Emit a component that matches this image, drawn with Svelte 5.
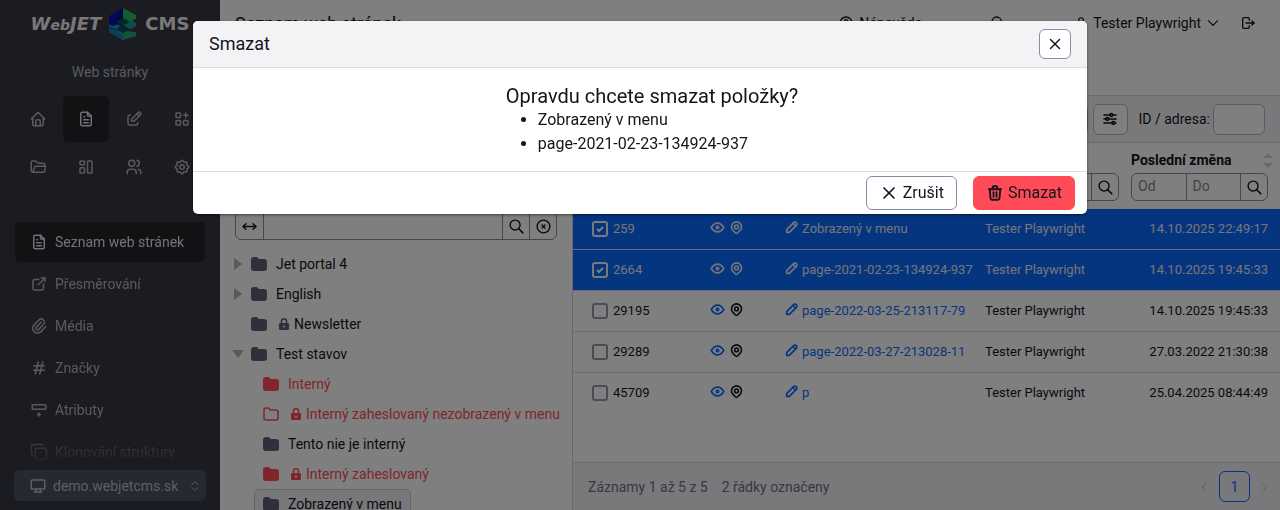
<script>
  const paths = {
    home: ['M5 12H3l9-9 9 9h-2', 'M5 12v7a2 2 0 0 0 2 2h10a2 2 0 0 0 2-2v-7', 'M9 21v-6a2 2 0 0 1 2-2h2a2 2 0 0 1 2 2v6'],
    file: ['M14 3v4a1 1 0 0 0 1 1h4', 'M17 21H7a2 2 0 0 1-2-2V5a2 2 0 0 1 2-2h7l5 5v11a2 2 0 0 1-2 2z', 'M9 9h1', 'M9 13h6', 'M9 17h6'],
    edit: ['M7 7H6a2 2 0 0 0-2 2v9a2 2 0 0 0 2 2h9a2 2 0 0 0 2-2v-1', 'M20.4 6.6a2.1 2.1 0 0 0-3-3L9 12v3h3l8.400-8.400z', 'M16 5l3 3'],
    apps: ['M4 5a1 1 0 0 1 1-1h4a1 1 0 0 1 1 1v4a1 1 0 0 1-1 1H5a1 1 0 0 1-1-1z', 'M4 15a1 1 0 0 1 1-1h4a1 1 0 0 1 1 1v4a1 1 0 0 1-1 1H5a1 1 0 0 1-1-1z', 'M14 15a1 1 0 0 1 1-1h4a1 1 0 0 1 1 1v4a1 1 0 0 1-1 1h-4a1 1 0 0 1-1-1z', 'M14 7h6', 'M17 4v6'],
    folderOpen: ['M5 19l2.757-7.351A1 1 0 0 1 8.693 11H21a1 1 0 0 1 .986 1.164l-.996 5.211A2 2 0 0 1 19.026 19H5a2 2 0 0 1-2-2V6a2 2 0 0 1 2-2h4l3 3h7a2 2 0 0 1 2 2v2'],
    layout: ['M4 5a1 1 0 0 1 1-1h4a1 1 0 0 1 1 1v3a1 1 0 0 1-1 1H5a1 1 0 0 1-1-1z', 'M4 14a1 1 0 0 1 1-1h4a1 1 0 0 1 1 1v5a1 1 0 0 1-1 1H5a1 1 0 0 1-1-1z', 'M14 5a1 1 0 0 1 1-1h4a1 1 0 0 1 1 1v14a1 1 0 0 1-1 1h-4a1 1 0 0 1-1-1z'],
    users: ['M5 7a4 4 0 1 0 8 0 4 4 0 1 0-8 0', 'M3 21v-2a4 4 0 0 1 4-4h4a4 4 0 0 1 4 4v2', 'M16 3.130a4 4 0 0 1 0 7.750', 'M21 21v-2a4 4 0 0 0-3-3.850'],
    settings: ['M10.325 4.317c.426-1.756 2.924-1.756 3.350 0a1.724 1.724 0 0 0 2.573 1.066c1.543-.94 3.310.826 2.370 2.370a1.724 1.724 0 0 0 1.065 2.572c1.756.426 1.756 2.924 0 3.350a1.724 1.724 0 0 0-1.066 2.573c.94 1.543-.826 3.310-2.370 2.370a1.724 1.724 0 0 0-2.572 1.065c-.426 1.756-2.924 1.756-3.350 0a1.724 1.724 0 0 0-2.573-1.066c-1.543.94-3.310-.826-2.370-2.370a1.724 1.724 0 0 0-1.065-2.572c-1.756-.426-1.756-2.924 0-3.350a1.724 1.724 0 0 0 1.066-2.573c-.94-1.543.826-3.310 2.370-2.370 1 .608 2.296.07 2.572-1.065z', 'M9 12a3 3 0 1 0 6 0 3 3 0 0 0-6 0'],
    external: ['M12 6H6a2 2 0 0 0-2 2v10a2 2 0 0 0 2 2h10a2 2 0 0 0 2-2v-6', 'M11 13l9-9', 'M15 4h5v5'],
    clip: ['M15 7l-6.500 6.500a1.500 1.500 0 0 0 3 3L18 10a3 3 0 0 0-6-6l-6.500 6.500a4.500 4.500 0 0 0 9 9L21 13'],
    hash: ['M5 9h14', 'M5 15h14', 'M11 4L7 20', 'M17 4l-4 16'],
    attributes: ['M4 5h16a1 1 0 0 1 1 1v4a1 1 0 0 1-1 1H4a1 1 0 0 1-1-1V6a1 1 0 0 1 1-1z', 'M10 18h4', 'M12 16v4'],
    copy: ['M7 10a3 3 0 0 1 3-3h9a3 3 0 0 1 3 3v9a3 3 0 0 1-3 3h-9a3 3 0 0 1-3-3z', 'M4 17a2 2 0 0 1-2-2V5a3 3 0 0 1 3-3h10a2 2 0 0 1 2 1'],
    desktop: ['M3 5a1 1 0 0 1 1-1h16a1 1 0 0 1 1 1v10a1 1 0 0 1-1 1H4a1 1 0 0 1-1-1z', 'M7 20h10', 'M9 16v4', 'M15 16v4'],
    selector: ['M6 9l6-6 6 6', 'M6 15l6 6 6-6'],
    x: ['M18 6L6 18', 'M6 6l12 12'],
    trash: ['M4 7h16', 'M10 11v6', 'M14 11v6', 'M5 7l1 12a2 2 0 0 0 2 2h8a2 2 0 0 0 2-2l1-12', 'M9 7V4a1 1 0 0 1 1-1h4a1 1 0 0 1 1 1v3'],
    search: ['M3 10a7 7 0 1 0 14 0 7 7 0 1 0-14 0', 'M21 21l-6-6'],
    arrows: ['M7 8l-4 4 4 4', 'M17 8l4 4-4 4', 'M3 12h18'],
    clear: ['M3 12a9 9 0 1 0 18 0 9 9 0 1 0-18 0', 'M10 10l4 4', 'M14 10l-4 4'],
    help: ['M3 12a9 9 0 1 0 18 0 9 9 0 1 0-18 0', 'M12 17v.010', 'M12 13.500a1.500 1.500 0 0 1 1-1.500 2.600 2.600 0 1 0-3-4'],
    user: ['M8 7a4 4 0 1 0 8 0 4 4 0 0 0-8 0', 'M6 21v-2a4 4 0 0 1 4-4h4a4 4 0 0 1 4 4v2'],
    down: ['M4 8l8 8 8-8'],
    logout: ['M14 8V6a2 2 0 0 0-2-2H6a2 2 0 0 0-2 2v12a2 2 0 0 0 2 2h6a2 2 0 0 0 2-2v-2', 'M9 12h12l-3-3', 'M18 15l3-3'],
    sliders: ['M12 6a2 2 0 1 0 4 0 2 2 0 1 0-4 0', 'M3 6h9', 'M16 6h5', 'M6 12a2 2 0 1 0 4 0 2 2 0 1 0-4 0', 'M3 12h3', 'M10 12h11', 'M15 18a2 2 0 1 0 4 0 2 2 0 1 0-4 0', 'M3 18h12', 'M19 18h2'],
    eye: ['M10 12a2 2 0 1 0 4 0 2 2 0 0 0-4 0', 'M22 12c-2.700 4.700-6 7-10 7s-7.300-2.300-10-7c2.700-4.700 6-7 10-7s7.300 2.300 10 7'],
    pin: ['M9 11a3 3 0 1 0 6 0 3 3 0 0 0-6 0', 'M17.657 16.657L13.414 20.900a2 2 0 0 1-2.827 0l-4.244-4.243a8 8 0 1 1 11.314 0z'],
    pencil: ['M4 20h4L18.500 9.500a2.828 2.828 0 1 0-4-4L4 16v4', 'M13.500 6.500l4 4'],
    left: ['M15 6l-6 6 6 6'],
    right: ['M9 6l6 6-6 6']
  };

  const modules = [
    ['home', 'Úvod'], ['file', 'Web stránky'], ['edit', 'Příspěvky'], ['apps', 'Aplikace'],
    ['folderOpen', 'Soubory'], ['layout', 'Šablony'], ['users', 'Uživatelé'], ['settings', 'Nastavení']
  ];
  const menu = [
    ['file', 'Seznam web stránek'], ['external', 'Přesměrování'], ['clip', 'Média'],
    ['hash', 'Značky'], ['attributes', 'Atributy'], ['copy', 'Klonování struktury']
  ];
  const tree = [
    { name: 'Jet portal 4', arrow: 'closed' },
    { name: 'English', arrow: 'closed' },
    { name: 'Newsletter', locked: true },
    { name: 'Test stavov', arrow: 'open' },
    { name: 'Interný', child: true, internal: true },
    { name: 'Interný zaheslovaný nezobrazený v menu', child: true, internal: true, locked: true, outline: true },
    { name: 'Tento nie je interný', child: true },
    { name: 'Interný zaheslovaný', child: true, internal: true, locked: true },
    { name: 'Zobrazený v menu', child: true, selected: true }
  ];
  let rows = $state([
    { id: 259, name: 'Zobrazený v menu', date: '14.10.2025 22:49:17', selected: true },
    { id: 2664, name: 'page-2021-02-23-134924-937', date: '14.10.2025 19:45:33', selected: true },
    { id: 29195, name: 'page-2022-03-25-213117-79', date: '14.10.2025 19:45:33', selected: false },
    { id: 29289, name: 'page-2022-03-27-213028-11', date: '27.03.2022 21:30:38', selected: false },
    { id: 45709, name: 'p', date: '25.04.2025 08:44:49', selected: false }
  ]);
  let open = $state(true);
  const chosen = $derived(rows.filter((r) => r.selected));
</script>

{#snippet icon(name, size = 18, weight = 2)}
  <svg class="icon" width={size} height={size} viewBox="0 0 24 24" stroke-width={weight} aria-hidden="true">
    {#each paths[name] as d}<path {d} />{/each}
  </svg>
{/snippet}

<div class="app">
  <aside>
    <a class="logo" href="#home" aria-label="WebJET CMS">
      <span class="slant">W<small>eb</small>JET</span>
      <svg width="28" height="32" viewBox="0 0 28 32" aria-hidden="true">
        <path fill="#1c5aa8" d="M0 8L14 0v32L0 24z" />
        <path fill="#2398a0" d="M14 12l13 6-13 7-14-7z" />
        <path fill="#27a677" d="M14 23l13 1v4l-13 4-14-8z" />
        <path fill="#1e7db0" d="M0 20l14 7v5L0 24z" />
        <path fill="#209a8c" d="M14 8l13 7v3l-13 7z" />
        <path fill="#0610ac" d="M0 8L14 0v14L4 18l-4-2z" />
        <path fill="#060e78" d="M14 0v19l-8-4z" />
        <path fill="#2bb86b" d="M14 0l13 7v4l-7 3-6-3z" />
        <path fill="#07504f" d="M14 10l7 4-7 4-7-4z" />
        <path fill="#074a5c" d="M14 17l7 4-7 4-7-4z" />
      </svg>
      <span>CMS</span>
    </a>
    <p class="section">Web stránky</p>
    <nav class="modules">
      {#each modules as [glyph, label], i}
        <a href="#{glyph}" class:active={i === 1} aria-label={label}>{@render icon(glyph, 18)}</a>
      {/each}
    </nav>
    <nav class="menu">
      {#each menu as [glyph, label], i}
        <a href="#{glyph}" class:active={i === 0}>{@render icon(glyph, 18)}<span>{label}</span></a>
      {/each}
    </nav>
    <div class="domain">
      {@render icon('desktop', 18)}
      <select aria-label="Doména"><option>demo.webjetcms.sk</option></select>
      {@render icon('selector', 12, 2)}
    </div>
  </aside>

  <main>
    <header>
      <h1>Seznam web stránek</h1>
      <a class="help" href="#help">{@render icon('help', 16)}Nápověda</a>
      <button class="find" aria-label="Hledat">{@render icon('search', 16)}</button>
      <button class="account">{@render icon('user', 14)}Tester Playwright{@render icon('down', 14)}</button>
      <button aria-label="Odhlásit">{@render icon('logout', 16)}</button>
    </header>

    <div class="panels">
      <section class="folders">
        <div class="bar"></div>
        <div class="group tree-search">
          <button aria-label="Obsahuje">{@render icon('arrows', 17)}</button>
          <input aria-label="Hledat složku" />
          <button aria-label="Hledat">{@render icon('search', 17)}</button>
          <button aria-label="Zrušit hledání">{@render icon('clear', 17)}</button>
        </div>
        <ul class="tree">
          {#each tree as node}
            <li class:child={node.child} class:internal={node.internal} class:selected={node.selected}>
              <span class="toggle">
                {#if node.arrow === 'closed'}
                  <svg width="8" height="12" viewBox="0 0 8 12"><path d="M0 0l8 6-8 6z" /></svg>
                {:else if node.arrow === 'open'}
                  <svg width="12" height="8" viewBox="0 0 12 8"><path d="M0 0h12L6 8z" /></svg>
                {/if}
              </span>
              <a href="#folder">
                <svg class="folder" class:outline={node.outline} width="16" height="14" viewBox="0 0 16 14">
                  <path d="M1 3a2 2 0 0 1 2-2h2.500l2 2H13a2 2 0 0 1 2 2v6a2 2 0 0 1-2 2H3a2 2 0 0 1-2-2z" />
                </svg>
                {#if node.locked}
                  <svg class="lock" width="10" height="12" viewBox="0 0 10 12">
                    <path fill="none" stroke="currentColor" stroke-width="1.500" d="M2.500 6V3.300a2.500 2.500 0 0 1 5 0V6" />
                    <path fill="currentColor" fill-rule="evenodd" d="M1.200 5h7.600A1.200 1.200 0 0 1 10 6.200v4.600A1.200 1.200 0 0 1 8.800 12H1.200A1.200 1.200 0 0 1 0 10.800V6.200A1.200 1.200 0 0 1 1.200 5zM5 7.500a1 1 0 1 0 0 2 1 1 0 0 0 0-2z" />
                  </svg>
                {/if}
                <span>{node.name}</span>
              </a>
            </li>
          {/each}
        </ul>
      </section>

      <section class="pages">
        <div class="bar">
          <button class="tool" aria-label="Obnovit"></button>
          <button class="tool" aria-label="Nastavení tabulky">{@render icon('sliders', 16, 2.5)}</button>
          <label for="address">ID / adresa:</label>
          <input id="address" />
        </div>
        <table>
          <colgroup><col class="c-id" /><col class="c-state" /><col /><col class="c-author" /><col class="c-date" /></colgroup>
          <thead>
            <tr>
              <th aria-label="ID"></th>
              <th aria-label="Stav"></th>
              <th aria-label="Název"></th>
              <th aria-label="Autor">
                <div class="title"></div>
                <div class="group"><input aria-label="Autor" /><button aria-label="Hledat autora">{@render icon('search', 17)}</button></div>
              </th>
              <th class="date">
                <div class="title">Poslední změna
                  <svg class="sort" width="10" height="15" viewBox="0 0 10 15" aria-hidden="true"><path d="M5 0l5 5H0zM0 10h10l-5 5z" /></svg>
                </div>
                <div class="group">
                  <input aria-label="Datum od" placeholder="Od" />
                  <input aria-label="Datum do" placeholder="Do" />
                  <button aria-label="Hledat datum">{@render icon('search', 17)}</button>
                </div>
              </th>
            </tr>
          </thead>
          <tbody>
            {#each rows as row}
              <tr class:selected={row.selected}>
                <td><label class="check"><input type="checkbox" bind:checked={row.selected} />{row.id}</label></td>
                <td>
                  <div class="state">
                    <a href="#view" aria-label="Zobrazit">{@render icon('eye', 15, 2.5)}</a>
                    {@render icon('pin', 15, 2.5)}
                  </div>
                </td>
                <td><a class="name" href="#page">{@render icon('pencil', 16, 2.5)}{row.name}</a></td>
                <td>Tester Playwright</td>
                <td class="date">{row.date}</td>
              </tr>
            {/each}
          </tbody>
        </table>
        <footer>
          <span>Záznamy 1 až 5 z 5</span>
          <span>2 řádky označeny</span>
          <nav class="pager">
            <button aria-label="Předchozí" disabled>{@render icon('left', 14)}</button>
            <button class="current">1</button>
            <button aria-label="Další" disabled>{@render icon('right', 14)}</button>
          </nav>
        </footer>
      </section>
    </div>
  </main>
</div>

{#if open}
  <div class="backdrop">
    <div class="modal" role="dialog" aria-modal="true" aria-labelledby="dialog-title">
      <div class="modal-head">
        <h2 id="dialog-title">Smazat</h2>
        <button class="close" aria-label="Zavřít" onclick={() => (open = false)}>{@render icon('x', 18)}</button>
      </div>
      <div class="modal-body">
        <div>
          <h3>Opravdu chcete smazat položky?</h3>
          <ul>
            {#each chosen as row}<li>{row.name}</li>{/each}
          </ul>
        </div>
      </div>
      <div class="modal-foot">
        <button class="cancel" onclick={() => (open = false)}>{@render icon('x', 20)}Zrušit</button>
        <button class="delete">{@render icon('trash', 18, 2.5)}Smazat</button>
      </div>
    </div>
  </div>
{/if}

<style>
  :global(body) { margin: 0; background: #fff; }
  :global(*) { box-sizing: border-box; }
  .app, .backdrop { font: 14px/20px Roboto, "Noto Sans", sans-serif; color: #13151b; }
  button, input, select { font: inherit; color: inherit; margin: 0; }
  button { background: none; border: 0; padding: 0; display: flex; align-items: center; justify-content: center; }
  a { color: inherit; text-decoration: none; }
  h1, h2, h3, p, ul { margin: 0; padding: 0; font-weight: 400; }
  .icon { fill: none; stroke: currentColor; stroke-linecap: round; stroke-linejoin: round; flex: none; display: block; }

  .app { display: flex; height: 100vh; overflow: hidden; }
  aside { width: 220px; flex: none; background: #373943; color: #b2b4bc; display: flex; flex-direction: column; padding: 8px 14px 9px; }
  .logo { display: flex; align-items: center; justify-content: center; gap: 8px; height: 32px; font: 700 18px/32px "DejaVu Sans", sans-serif; color: #f0f0f0; }
  .slant { font-style: italic; }
  .logo small { font-size: 14px; }
  .section { text-align: center; margin: 22px 0 13px; }
  .modules { display: grid; grid-template-columns: repeat(4, 1fr); }
  .modules a { height: 46px; margin: 1px; border-radius: 5px; display: flex; align-items: center; justify-content: center; }
  .active { background: #232429; color: #e2e4ea; }
  .menu { flex: 1; min-height: 0; overflow: hidden; margin: 31px 1px 0; display: flex; flex-direction: column; gap: 2px; -webkit-mask-image: linear-gradient(#000 calc(100% - 50px), transparent calc(100% - 4px)); mask-image: linear-gradient(#000 calc(100% - 50px), transparent calc(100% - 4px)); }
  .menu a { flex: none; height: 40px; display: flex; align-items: center; gap: 7px; padding: 0 15px; border-radius: 5px; }
  .domain { height: 31px; flex: none; background: #4c5064; border-radius: 6px; display: flex; align-items: center; gap: 6px; padding: 0 5px 0 15px; color: #bcbec6; }
  .domain select { appearance: none; background: none; border: 0; padding: 0; flex: 1; min-width: 0; }

  main { flex: 1; min-width: 0; display: flex; flex-direction: column; }
  header { height: 95px; flex: none; display: flex; align-items: flex-start; padding: 13px 24px 0 15px; }
  header h1 { font-size: 18px; line-height: 22px; flex: 1; }
  header button, .help { display: flex; align-items: center; height: 20px; gap: 5px; }
  .find { margin: 0 68px; }
  .account { margin-right: 20px; }

  .panels { flex: 1; min-height: 0; display: flex; }
  .bar { height: 48px; flex: none; border: solid #d8d9e0; border-width: 1px 0; background: #f3f3f6; display: flex; align-items: center; justify-content: flex-end; padding: 0 15px; }
  .folders { width: 353px; flex: none; border-right: 1px solid #d3d3da; overflow: hidden; }
  .group { display: flex; height: 28px; border: 1px solid #868ea5; border-radius: 6px; overflow: hidden; }
  .group > * { border: 0; border-left: 1px solid #868ea5; }
  .group > :first-child { border-left: 0; }
  .group input { flex: 1; min-width: 0; width: 0; padding: 0 6px; background: none; }
  .group button { width: 27px; flex: none; }
  .tree-search { margin: 69px 15px 9px; }
  .tree { list-style: none; }
  .tree li { height: 30px; display: flex; align-items: center; padding-left: 11px; }
  .tree li.child { padding-left: 23px; }
  .toggle { width: 14px; display: flex; justify-content: center; }
  .toggle path { fill: #b0b2c0; }
  .tree a { display: flex; align-items: center; gap: 9px; height: 30px; padding: 0 8px 0 5px; border: 1px solid transparent; border-radius: 5px; white-space: nowrap; }
  .tree .lock { margin: 0 -4px 0 3px; color: #5c6076; }
  .folder path { fill: #5c6076; stroke: #5c6076; stroke-width: 2; }
  .internal a, .tree .internal .lock { color: #ff4b58; }
  .internal .folder path { fill: #ff4b58; stroke: #ff4b58; }
  .internal .folder.outline path { fill: none; stroke-width: 1.500; }
  .tree .selected a { background: #f0f0f6; border-color: #c8cadc; margin-left: -3px; padding-left: 8px; }

  .pages { flex: 1; min-width: 0; display: flex; flex-direction: column; }
  .tool { width: 35px; height: 31px; margin-right: 5px; border: 1px solid #b4b6c6; border-radius: 6px; background: #fff; }
  .bar label { margin: 0 3px 0 6px; }
  .bar input { width: 52px; height: 31px; border: 1px solid #b4b6c6; border-radius: 6px; background: #fff; padding: 0 8px; }
  table { width: 100%; table-layout: fixed; border-collapse: collapse; font-size: 13px; }
  .c-id { width: 127px; }
  .c-state { width: 73px; }
  .c-author { width: 146px; }
  .c-date { width: 161px; }
  th { padding: 7px 0 8px 12px; vertical-align: top; text-align: left; font-weight: 400; }
  .title { height: 20px; margin-bottom: 3px; font-weight: 700; display: flex; justify-content: space-between; align-items: center; white-space: nowrap; }
  th.date .title { margin-right: -5px; font-size: 14px; }
  .sort { fill: #d3d4dc; flex: none; }
  .date { padding-right: 12px; text-align: right; }
  th.date { text-align: left; }
  input::placeholder { color: #84868e; opacity: 1; font-size: 14px; }
  tbody tr { height: 41px; border-bottom: 1px solid #d8d9e0; }
  tbody tr:first-child { height: 40px; }
  tbody tr:last-child { border-bottom: 0; }
  td { padding: 0 0 0 12px; white-space: nowrap; }
  td.date { padding: 0 12px 0 0; }
  .check { display: flex; align-items: center; gap: 5px; padding-left: 7px; }
  .check input { appearance: none; width: 16px; height: 16px; border: 2px solid #9094a8; border-radius: 3px; }
  .check input:checked { border-color: #f4f4f6; background: url('data:image/svg+xml,<svg xmlns="http://www.w3.org/2000/svg" viewBox="0 0 12 12"><path d="M3 6l2 2 4-4" fill="none" stroke="white" stroke-width="2"/></svg>'); }
  .state { display: flex; gap: 4px; align-items: center; padding-bottom: 3px; margin-left: -2px; }
  .state a, .name { color: #0a6bfd; }
  .name { display: flex; align-items: center; gap: 2px; margin-left: -1px; }
  .name :global(svg) { margin-bottom: 3px; }
  tbody .selected { background: #0a6bfd; color: #e8ecf4; }
  tbody .selected .state a, tbody .selected .name { color: inherit; }
  footer { margin-top: auto; height: 48px; flex: none; border-top: 1px solid #d8d9e0; background: #f3f3f6; display: flex; align-items: center; gap: 14px; padding: 0 8px 0 15px; color: #6d7080; }
  .pager { margin-left: auto; display: flex; align-items: center; gap: 8px; color: #d0d1da; }
  .current { width: 31px; height: 31px; border: 1px solid #0a6bfd; border-radius: 6px; color: #0a6bfd; }

  .backdrop { position: fixed; inset: 0; background: rgba(0, 0, 0, 0.5); padding: 21px 16px; }
  .modal { max-width: 894px; margin: 0 auto; background: #fff; border-radius: 5px; overflow: hidden; box-shadow: 0 1px 3px rgba(0, 0, 0, 0.5); font-size: 16px; line-height: 24px; }
  .modal-head { display: flex; align-items: center; justify-content: space-between; padding: 8px 16px; background: #f3f3f6; border-bottom: 1px solid #dcdde1; }
  .modal h2 { font-size: 18px; line-height: 24px; }
  .close { width: 32px; height: 30px; border: 1px solid #868ea5; border-radius: 6px; background: #fff; }
  .modal-body { display: flex; justify-content: center; padding: 16px 16px 15px 40px; }
  .modal h3 { font-size: 20px; line-height: 24px; }
  .modal-body ul { padding-left: 32px; }
  .modal-foot { display: flex; justify-content: flex-end; gap: 16px; padding: 4px 12px; border-top: 1px solid #dcdde1; }
  .modal-foot button { height: 34px; gap: 4px; padding: 0 12px; border: 1px solid #868ea5; border-radius: 6px; }
  .modal-foot .delete { background: #ff4b58; border-color: #ff4b58; }
</style>
